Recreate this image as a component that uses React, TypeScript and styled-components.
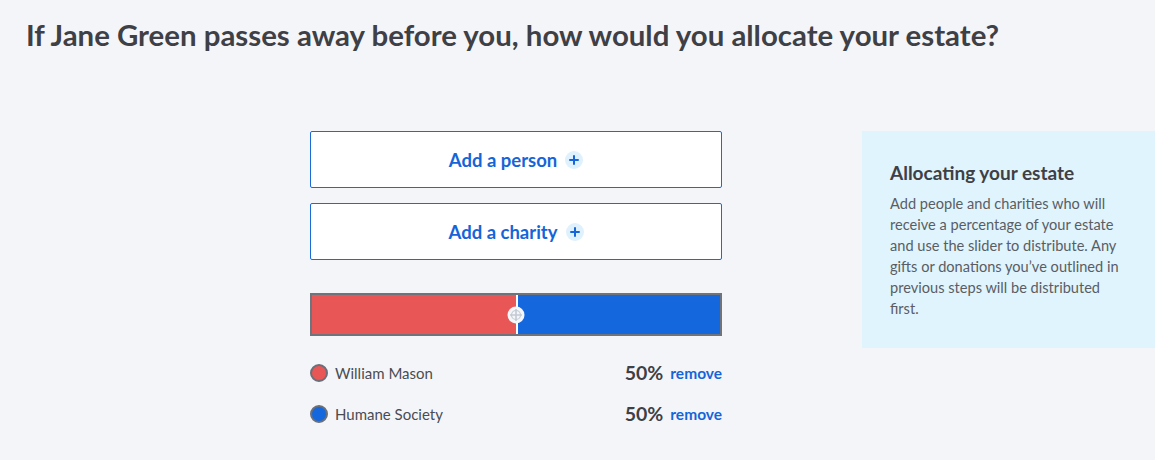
import React from "react"
import styled, { createGlobalStyle } from "styled-components"

const GlobalStyle = createGlobalStyle`
  html, body {
    margin: 0;
    padding: 0;
    background: #f4f5f9;
    overflow: hidden;
  }
  body {
    font-family: Lato, "Noto Sans", sans-serif;
    color: #3f4146;
  }
`

const Page = styled.div`
  width: 1155px;
  height: 460px;
  box-sizing: border-box;
  padding-top: 16px;
`

const Title = styled.h1`
  margin: 0 0 0 26px;
  font-size: 29.4px;
  line-height: 38px;
  font-weight: 700;
  color: #3e4045;
`

const Body = styled.div`
  display: flex;
  align-items: flex-start;
  padding-left: 310px;
  margin-top: 77px;
`

const MainColumn = styled.div`
  width: 412px;
  display: flex;
  flex-direction: column;
`

const AddButton = styled.button`
  height: 57px;
  width: 100%;
  margin-bottom: 15px;
  display: flex;
  align-items: center;
  justify-content: center;
  gap: 8px;
  background: #ffffff;
  border: 1px solid #1b6bd6;
  border-radius: 2px;
  padding: 0;
  font-family: Lato, "Noto Sans", sans-serif;
  font-size: 18.5px;
  font-weight: 700;
  color: #1565d8;
  cursor: pointer;
`

const PlusBadge = styled.span`
  width: 18px;
  height: 18px;
  border-radius: 50%;
  background: #dff1fc;
  display: flex;
  align-items: center;
  justify-content: center;
`

const Slider = styled.div`
  position: relative;
  margin-top: 18px;
  height: 43px;
  box-sizing: border-box;
  border: 2px solid #6e737c;
  display: flex;
`

const Segment = styled.div<{ $color: string }>`
  height: 100%;
  background: ${(p) => p.$color};
`

const Divider = styled.div`
  width: 2px;
  background: #ffffff;
`

const Thumb = styled.div`
  position: absolute;
  top: 50%;
  width: 18px;
  height: 18px;
  transform: translate(-50%, -50%);
  display: flex;
`

const Legend = styled.div`
  margin-top: 27px;
  display: flex;
  flex-direction: column;
  gap: 22px;
`

const LegendRow = styled.div`
  display: flex;
  align-items: center;
  height: 19px;
`

const Dot = styled.span<{ $color: string }>`
  width: 18px;
  height: 18px;
  box-sizing: border-box;
  border-radius: 50%;
  border: 2px solid #6b6f78;
  background: ${(p) => p.$color};
  flex: none;
`

const Name = styled.span`
  margin-left: 7px;
  font-size: 15px;
  color: #4a4c51;
  flex: 1;
`

const Percent = styled.span`
  font-size: 19.5px;
  font-weight: 700;
  color: #3e4045;
`

const Remove = styled.a`
  margin-left: 7px;
  font-size: 15.5px;
  font-weight: 700;
  color: #1565d8;
  text-decoration: none;
  cursor: pointer;
`

const InfoPanel = styled.aside`
  margin-left: 140px;
  flex: 1;
  height: 217px;
  box-sizing: border-box;
  background: #dff4fd;
  padding: 31px 24px 0 28px;
`

const InfoTitle = styled.h2`
  margin: 0 0 9px;
  font-size: 19px;
  line-height: 22px;
  font-weight: 700;
  color: #3e4045;
`

const InfoText = styled.p`
  margin: 0;
  max-width: 238px;
  font-size: 14.6px;
  line-height: 21px;
  color: #5a5d63;
`

const PlusIcon = () => (
  <svg width="10" height="10" viewBox="0 0 10 10">
    <path d="M5 1v8M1 5h8" stroke="#1565d8" strokeWidth="2" strokeLinecap="round" />
  </svg>
)

const ThumbIcon = () => (
  <svg width="18" height="18" viewBox="0 0 18 18">
    <circle cx="9" cy="9" r="8.5" fill="#f4f6f9" />
    <path d="M9 3v12M3 9h12" stroke="#c3cad3" strokeWidth="1.6" />
    <circle cx="9" cy="9" r="4.5" fill="none" stroke="#c3cad3" strokeWidth="1.2" />
  </svg>
)

const beneficiaries = [
  { name: "William Mason", share: 50, color: "#e85656" },
  { name: "Humane Society", share: 50, color: "#1467dc" },
]

export default function App() {
  const left = beneficiaries[0].share
  return (
    <Page>
      <GlobalStyle />
      <Title>If Jane Green passes away before you, how would you allocate your estate?</Title>
      <Body>
        <MainColumn>
          <AddButton>
            Add a person
            <PlusBadge>
              <PlusIcon />
            </PlusBadge>
          </AddButton>
          <AddButton>
            Add a charity
            <PlusBadge>
              <PlusIcon />
            </PlusBadge>
          </AddButton>
          <Slider>
            <Segment $color={beneficiaries[0].color} style={{ width: `${left}%` }} />
            <Divider />
            <Segment $color={beneficiaries[1].color} style={{ flex: 1 }} />
            <Thumb style={{ left: `${left}%` }}>
              <ThumbIcon />
            </Thumb>
          </Slider>
          <Legend>
            {beneficiaries.map((b) => (
              <LegendRow key={b.name}>
                <Dot $color={b.color} />
                <Name>{b.name}</Name>
                <Percent>{b.share}%</Percent>
                <Remove>remove</Remove>
              </LegendRow>
            ))}
          </Legend>
        </MainColumn>
        <InfoPanel>
          <InfoTitle>Allocating your estate</InfoTitle>
          <InfoText>
            Add people and charities who will receive a percentage of your estate and use the
            slider to distribute. Any gifts or donations you’ve outlined in previous steps will be
            distributed first.
          </InfoText>
        </InfoPanel>
      </Body>
    </Page>
  )
}
